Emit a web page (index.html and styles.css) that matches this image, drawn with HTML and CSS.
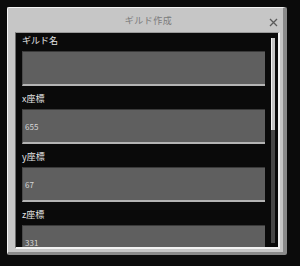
FILE: index.html
```html
<!DOCTYPE html>
<html lang="ja">
<head>
<meta charset="utf-8">
<link rel="stylesheet" href="styles.css">
</head>
<body>
<div class="dialog">
  <div class="titlebar">
    <span class="title">ギルド作成</span>
    <svg class="close" width="9" height="9" viewBox="0 0 9 9"><path d="M1 1 L8 8 M8 1 L1 8" stroke="#5a5a5a" stroke-width="1.3" fill="none"/></svg>
  </div>
  <div class="panel">
    <div class="fields">
      <div class="field">
        <div class="label">ギルド名</div>
        <div class="input"></div>
      </div>
      <div class="field">
        <div class="label">x座標</div>
        <div class="input">655</div>
      </div>
      <div class="field">
        <div class="label">y座標</div>
        <div class="input">67</div>
      </div>
      <div class="field">
        <div class="label">z座標</div>
        <div class="input">331</div>
      </div>
    </div>
    <div class="scrollbar"><div class="thumb"></div></div>
  </div>
</div>
</body>
</html>
```
FILE: styles.css
```css
html, body {
  margin: 0;
  padding: 0;
}
body {
  width: 300px;
  height: 266px;
  background: #0b0b0b;
  overflow: hidden;
  font-family: "Noto Sans CJK JP", "Noto Sans", sans-serif;
  padding-top: 7px;
  padding-left: 7px;
  box-sizing: border-box;
}
.dialog {
  width: 280px;
  height: 248px;
  box-sizing: border-box;
  background: #c6c6c6;
  border-top: 1px solid #f4f4f4;
  border-left: 1px solid #f4f4f4;
  border-right: 4px solid #8a8a8a;
  border-bottom: 3px solid #8a8a8a;
  border-radius: 2px;
  padding: 0 3px 3px 7px;
  display: flex;
  flex-direction: column;
}
.titlebar {
  height: 24px;
  flex: none;
  display: flex;
  align-items: center;
  justify-content: center;
  position: relative;
}
.title {
  font-size: 9px;
  color: #7b7b7b;
  letter-spacing: 0.5px;
  margin-left: 2px;
}
.close {
  position: absolute;
  right: 2px;
  top: 10px;
}
.panel {
  flex: 1;
  background: #0a0a0a;
  border-top: 1px solid #9a9a9a;
  border-left: 1px solid #6a6a6a;
  border-right: 2px solid #f2f2f2;
  border-bottom: 2px solid #f2f2f2;
  display: flex;
  overflow: hidden;
  padding-left: 6px;
}
.fields {
  width: 243px;
  flex: none;
}
.field {
  margin-bottom: 5px;
}
.label {
  height: 16px;
  line-height: 16px;
  margin-bottom: 2px;
  font-size: 9px;
  color: #e2e2e2;
}
.input {
  height: 35px;
  box-sizing: border-box;
  background: #5f5f5f;
  border-top: 1px solid #3a3a3a;
  border-left: 1px solid #4a4a4a;
  border-bottom: 2px solid #b4b4b4;
  font-size: 8px;
  color: #d6d6d6;
  padding-left: 2px;
  display: flex;
  align-items: center;
}
.scrollbar {
  margin-left: 6px;
  margin-top: 5px;
  margin-bottom: 4px;
  width: 4px;
  background: #474747;
  display: flex;
  flex-direction: column;
}
.thumb {
  height: 92px;
  background: #c4c4c4;
  border-left: 1px solid #f0f0f0;
  box-sizing: border-box;
}
```
